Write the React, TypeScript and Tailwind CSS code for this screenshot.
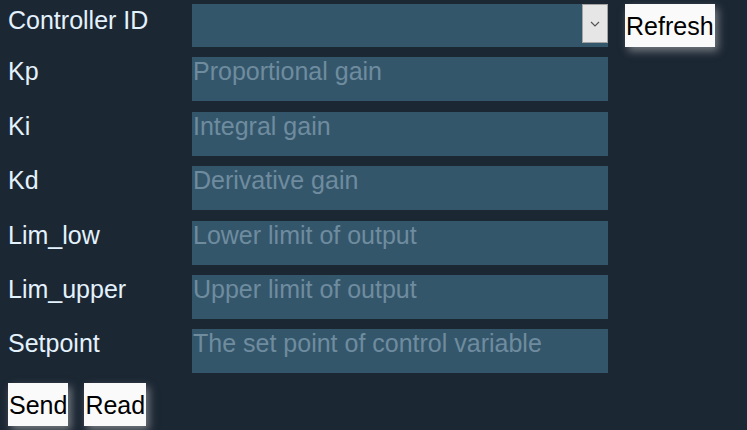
import { useState } from "react"

const fields = [
  { label: "Kp", placeholder: "Proportional gain" },
  { label: "Ki", placeholder: "Integral gain" },
  { label: "Kd", placeholder: "Derivative gain" },
  { label: "Lim_low", placeholder: "Lower limit of output" },
  { label: "Lim_upper", placeholder: "Upper limit of output" },
  { label: "Setpoint", placeholder: "The set point of control variable" },
]

const btn =
  "bg-[#fafafa] text-black px-[1px] pt-[8px] pb-[6px] leading-[1.15] shadow-[3px_4px_8px_rgba(190,190,190,0.55)]"

export default function App() {
  const [values, setValues] = useState<{ [key: string]: string }>({})

  return (
    <div className="min-h-[430px] bg-[#1c2734] pl-[8px] pt-[4px] font-['Liberation_Sans',Arial,sans-serif] text-[25px] leading-[1.15] text-[#e3f2fd]">
      <div className="grid grid-cols-[184px_416px_auto] gap-y-[10.4px]">
        <span className="pt-[2px]">Controller ID</span>
        <div className="relative h-[43px] bg-[#34566b]">
          <select className="h-full w-full appearance-none bg-transparent outline-none"></select>
          <span className="pointer-events-none absolute right-0 top-0 flex h-[39px] w-[26px] items-center justify-center border border-[#a3a3a3] bg-[#e6e6e6]">
            <svg width="10" height="6" viewBox="0 0 10 6">
              <polyline points="1,1 5,5 9,1" fill="none" stroke="#555" strokeWidth="1.2" />
            </svg>
          </span>
        </div>
        <div className="pl-[17px]">
          <button className={btn}>Refresh</button>
        </div>

        {fields.map((f) => (
          <div key={f.label} className="contents">
            <span>{f.label}</span>
            <textarea
              rows={1}
              value={values[f.label] || ""}
              onChange={(e) => setValues({ ...values, [f.label]: e.target.value })}
              placeholder={f.placeholder}
              className="h-[44px] resize-none overflow-hidden bg-[#34566b] px-[1px] py-0 leading-[1.15] text-[#e3f2fd] outline-none placeholder:text-[#6f8c9f]"
            />
            <span></span>
          </div>
        ))}
      </div>

      <div className="mt-[10px] flex gap-[16px] pb-[3px]">
        <button className={btn}>Send</button>
        <button className={btn}>Read</button>
      </div>
    </div>
  )
}
